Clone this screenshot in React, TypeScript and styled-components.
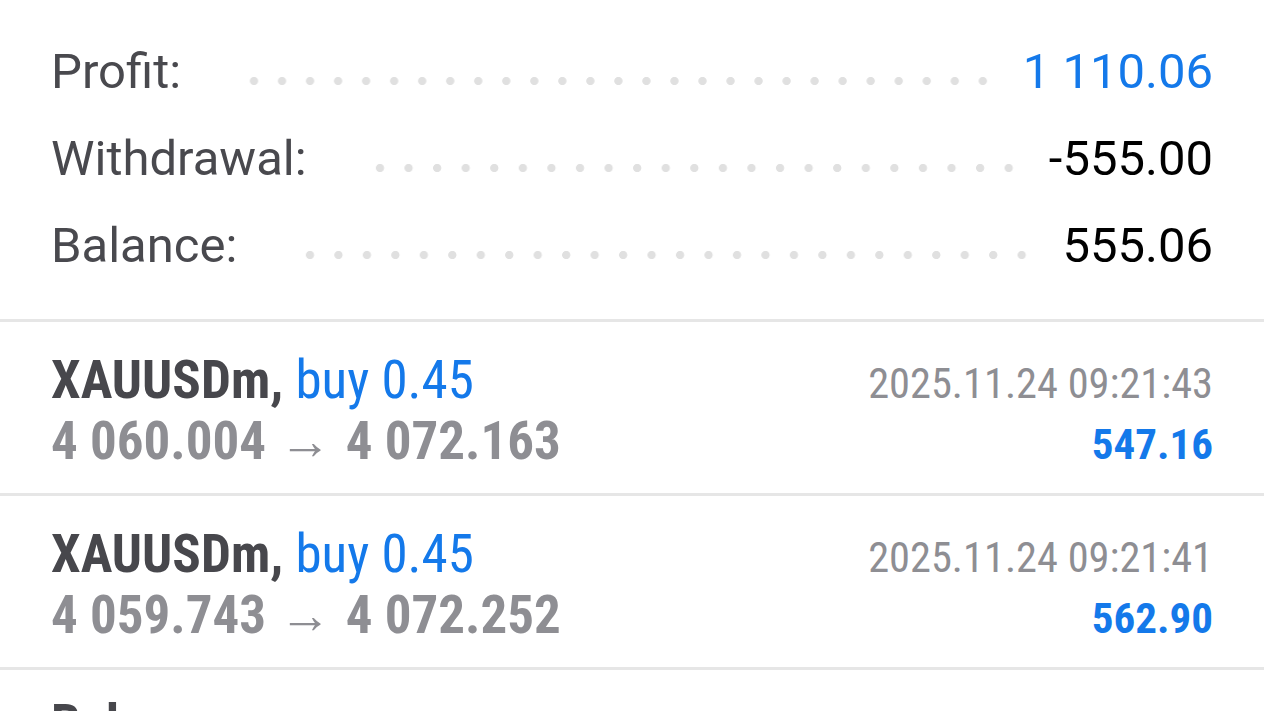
import React from "react";
import styled, { createGlobalStyle } from "styled-components";

const GlobalStyle = createGlobalStyle`
  html, body {
    margin: 0;
    padding: 0;
    background: #ffffff;
    overflow: hidden;
  }
  body {
    font-family: Roboto, "Noto Sans", sans-serif;
    -webkit-font-smoothing: antialiased;
  }
`;

const BLUE = "#1479ea";

interface Summary {
  label: string;
  value: string;
  accent?: boolean;
}

interface Deal {
  symbol: string;
  side?: string;
  open?: string;
  close?: string;
  time: string;
  profit?: string;
}

const summary: Summary[] = [
  { label: "Profit:", value: "1 110.06", accent: true },
  { label: "Withdrawal:", value: "-555.00" },
  { label: "Balance:", value: "555.06" },
];

const deals: Deal[] = [
  {
    symbol: "XAUUSDm,",
    side: "buy 0.45",
    open: "4 060.004",
    close: "4 072.163",
    time: "2025.11.24 09:21:43",
    profit: "547.16",
  },
  {
    symbol: "XAUUSDm,",
    side: "buy 0.45",
    open: "4 059.743",
    close: "4 072.252",
    time: "2025.11.24 09:21:41",
    profit: "562.90",
  },
  {
    symbol: "Balance",
    time: "2025.11.24 09:19:22",
  },
];

const Page = styled.div`
  width: 1264px;
  height: 711px;
  overflow: hidden;
  background: #fff;
`;

const SummaryBlock = styled.section`
  padding: 28px 51px 30px 51px;
  border-bottom: 3px solid #e6e6e6;
`;

const SummaryRow = styled.div`
  display: flex;
  align-items: center;
  height: 87px;
  font-size: 49px;
  line-height: 87px;
`;

const Label = styled.span`
  color: #49494e;
`;

const Dots = styled.span`
  flex: 1;
  height: 8px;
  margin: 18px 26px 0 59px;
  background-image: radial-gradient(circle, #e0e0e0 3.7px, transparent 4.5px);
  background-size: 28px 8px;
  background-repeat: space no-repeat;
`;

const Value = styled.span<{ $accent?: boolean }>`
  color: ${(p) => (p.$accent ? BLUE : "#000")};
`;

const DealRow = styled.div<{ $compact?: boolean }>`
  display: grid;
  grid-template-columns: 1fr auto;
  align-items: baseline;
  padding: ${(p) => (p.$compact ? "24px" : "28px")} 51px 21px 51px;
  border-bottom: 3px solid #e6e6e6;
  font-family: "Roboto Condensed", Roboto, sans-serif;
  font-stretch: 75%;
  line-height: 61px;
`;

const Title = styled.div`
  font-size: 53px;
  font-weight: 700;
  color: #47474c;
  white-space: nowrap;
`;

const Side = styled.span`
  font-weight: 400;
  color: ${BLUE};
`;

const Prices = styled.div`
  font-size: 53px;
  font-weight: 700;
  color: #8e8e93;
  white-space: nowrap;
`;

const Arrow = styled.span`
  font-weight: 400;
  font-size: 52px;
  margin: 0 0.28em 0 0.25em;
`;

const Time = styled.div`
  font-size: 42.4px;
  line-height: 54px;
  color: #8e8e93;
  text-align: right;
`;

const Amount = styled.div`
  font-size: 43px;
  line-height: 54px;
  font-weight: 700;
  color: ${BLUE};
  text-align: right;
`;

export default function App() {
  return (
    <Page>
      <GlobalStyle />
      <SummaryBlock>
        {summary.map((s) => (
          <SummaryRow key={s.label}>
            <Label>{s.label}</Label>
            <Dots />
            <Value $accent={s.accent}>{s.value}</Value>
          </SummaryRow>
        ))}
      </SummaryBlock>
      {deals.map((d, i) => (
        <DealRow key={i} $compact={!d.side}>
          <Title>
            {d.symbol}
            {d.side && (
              <>
                {" "}
                <Side>{d.side}</Side>
              </>
            )}
          </Title>
          <Time>{d.time}</Time>
          {d.open && (
            <>
              <Prices>
                {d.open}
                <Arrow>→</Arrow>
                {d.close}
              </Prices>
              <Amount>{d.profit}</Amount>
            </>
          )}
        </DealRow>
      ))}
    </Page>
  );
}
